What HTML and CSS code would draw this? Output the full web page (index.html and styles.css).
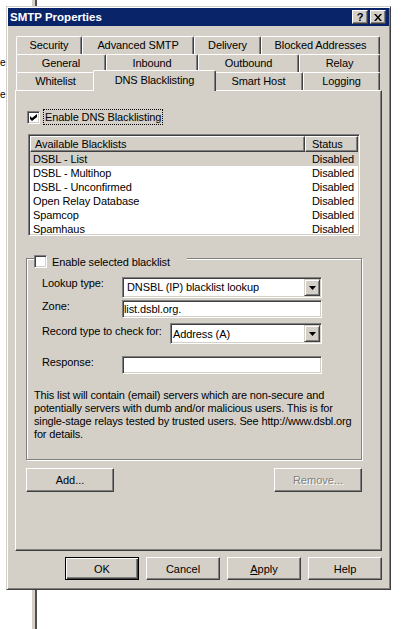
FILE: index.html
```html
<!DOCTYPE html>
<html lang="en">
<head>
    <meta charset="UTF-8">
    <title>SMTP Properties</title>
    <link rel="stylesheet" href="styles.css">
</head>
<body>
    <!-- bits of the window behind the dialog -->
    <div class="desk-line"></div>
    <div class="desk-text line-1">er</div>
    <div class="desk-text line-2">e</div>

    <div class="window">
        <div class="titlebar">
            <span class="title">SMTP Properties</span>
            <div class="caption-buttons">
                <div class="cap-btn help">?</div>
                <div class="cap-btn">
                    <svg width="8" height="7" viewBox="0 0 8 7"><path d="M0 0h2l2 2.4 2-2.4h2l-3 3.5 3 3.5h-2l-2-2.4-2 2.4h-2l3-3.5z" fill="#000"/></svg>
                </div>
            </div>
        </div>

        <div class="dialog">
            <div class="tabs">
                <div class="tab-row row-1">
                    <div class="tab">Security</div>
                    <div class="tab">Advanced SMTP</div>
                    <div class="tab">Delivery</div>
                    <div class="tab">Blocked Addresses</div>
                </div>
                <div class="tab-row row-2">
                    <div class="tab">General</div>
                    <div class="tab">Inbound</div>
                    <div class="tab">Outbound</div>
                    <div class="tab">Relay</div>
                </div>
                <div class="tab-row row-3">
                    <div class="tab">Whitelist</div>
                    <div class="tab active">DNS Blacklisting</div>
                    <div class="tab">Smart Host</div>
                    <div class="tab">Logging</div>
                </div>
            </div>

            <div class="panel">
                <div class="check-row">
                    <span class="checkbox">
                        <svg width="7" height="7" viewBox="0 0 7 7"><path d="M0 2l2 2 5-4v3l-5 4-2-2z" fill="#000"/></svg>
                    </span>
                    <span class="focus">Enable DNS Blacklisting</span>
                </div>

                <div class="listview">
                    <div class="lv-header">
                        <div class="lv-col">Available Blacklists</div>
                        <div class="lv-col status">Status</div>
                    </div>
                    <div class="lv-row selected"><span>DSBL - List</span><span class="status">Disabled</span></div>
                    <div class="lv-row"><span>DSBL - Multihop</span><span class="status">Disabled</span></div>
                    <div class="lv-row"><span>DSBL - Unconfirmed</span><span class="status">Disabled</span></div>
                    <div class="lv-row"><span>Open Relay Database</span><span class="status">Disabled</span></div>
                    <div class="lv-row"><span>Spamcop</span><span class="status">Disabled</span></div>
                    <div class="lv-row"><span>Spamhaus</span><span class="status">Disabled</span></div>
                </div>

                <div class="group">
                    <div class="group-title">
                        <span class="checkbox"></span>
                        <span>Enable selected blacklist</span>
                    </div>

                    <div class="field-row first">
                        <span class="label">Lookup type:</span>
                        <div class="combo">
                            <span class="value">DNSBL (IP) blacklist lookup</span>
                            <span class="arrow"><svg width="7" height="4" viewBox="0 0 7 4"><path d="M0 0h7l-3.5 4z" fill="#000"/></svg></span>
                        </div>
                    </div>
                    <div class="field-row zone">
                        <span class="label">Zone:</span>
                        <div class="edit">list.dsbl.org.</div>
                    </div>
                    <div class="field-row record">
                        <span class="label">Record type to check for:</span>
                        <div class="combo short">
                            <span class="value">Address (A)</span>
                            <span class="arrow"><svg width="7" height="4" viewBox="0 0 7 4"><path d="M0 0h7l-3.5 4z" fill="#000"/></svg></span>
                        </div>
                    </div>
                    <div class="field-row response">
                        <span class="label">Response:</span>
                        <div class="edit"></div>
                    </div>

                    <p class="note">
                        This list will contain (email) servers which are non-secure and<br>
                        potentially servers with dumb and/or malicious users. This is for<br>
                        single-stage relays tested by trusted users. See http://www.dsbl.org<br>
                        for details.
                    </p>
                </div>

                <div class="list-buttons">
                    <button class="btn wide">Add...</button>
                    <button class="btn wide" disabled>Remove...</button>
                </div>
            </div>

            <div class="dialog-buttons">
                <button class="btn default">OK</button>
                <button class="btn">Cancel</button>
                <button class="btn"><u>A</u>pply</button>
                <button class="btn">Help</button>
            </div>
        </div>
    </div>
</body>
</html>
```

FILE: styles.css
```css
body {
    margin: 0;
    width: 409px;
    height: 629px;
    overflow: hidden;
    position: relative;
    background: #fff;
    font-family: "Liberation Sans", Arial, sans-serif;
    font-size: 11px;
    letter-spacing: -0.1px;
    color: #000;
}

/* desktop behind the dialog */
.desk-line {
    position: absolute;
    left: 32px;
    top: 0;
    width: 3px;
    height: 629px;
    background: #d4d0c8;
    border-right: 2px solid #505050;
}
.desk-text {
    position: absolute;
    left: 0;
    font-size: 10px;
}
.desk-text.line-1 { top: 57px; }
.desk-text.line-2 { top: 89px; }

/* window frame */
.window {
    position: relative;
    margin: 6px 0 0 6px;
    width: 385px;
    height: 584px;
    box-sizing: border-box;
    background: #d4d0c8;
    border: 1px solid;
    border-color: #d4d0c8 #404040 #404040 #d4d0c8;
    box-shadow: inset 1px 1px #fff, inset -1px -1px #808080;
    padding: 1px;
}
.titlebar {
    height: 18px;
    background: #0a246a;
    color: #fff;
    display: flex;
    align-items: center;
    justify-content: space-between;
    padding: 0 3px 0 2px;
}
.title {
    font-weight: bold;
    font-size: 11.5px;
    letter-spacing: 0;
}
.caption-buttons {
    display: flex;
    gap: 2px;
}
.cap-btn {
    width: 16px;
    height: 14px;
    box-sizing: border-box;
    background: #d4d0c8;
    border: 1px solid;
    border-color: #fff #404040 #404040 #fff;
    box-shadow: inset -1px -1px #808080;
    display: flex;
    align-items: center;
    justify-content: center;
    color: #000;
}
.cap-btn.help {
    font-weight: bold;
    font-size: 11px;
    line-height: 12px;
}

.dialog {
    padding: 10px 7px 0 7px;
}

/* property sheet tabs, three rows */
.tabs {
    padding: 0 2px 0 1px;
}
.tab-row {
    display: grid;
    height: 18px;
}
.row-1 { grid-template-columns: 66px 112px 67px 119px; }
.row-2 { grid-template-columns: 90px 92px 101px 81px; }
.row-3 { grid-template-columns: 79px 119px 89px 77px; }

.tab {
    box-sizing: border-box;
    border-top: 1px solid #fff;
    border-left: 1px solid #fff;
    border-right: 1px solid #404040;
    box-shadow: inset -1px 0 #808080;
    border-radius: 2px 2px 0 0;
    background: #d4d0c8;
    display: flex;
    align-items: center;
    justify-content: center;
    padding-bottom: 1px;
}
.tab.active {
    margin: -2px -2px -1px -2px;
    position: relative;
    z-index: 1;
    padding-bottom: 2px;
}

.panel {
    height: 461px;
    box-sizing: border-box;
    border: 1px solid;
    border-color: #fff #404040 #404040 #fff;
    box-shadow: inset -1px -1px #808080;
    padding: 0 18px 0 10px;
}

/* checkboxes */
.checkbox {
    width: 13px;
    height: 13px;
    box-sizing: border-box;
    background: #fff;
    border: 1px solid;
    border-color: #808080 #fff #fff #808080;
    box-shadow: inset 1px 1px #404040, inset -1px -1px #d4d0c8;
    display: flex;
    align-items: center;
    justify-content: center;
    flex: none;
}
.check-row {
    display: flex;
    align-items: center;
    height: 16px;
    margin-top: 18px;
}
.check-row .checkbox {
    margin-left: 1px;
}
.focus {
    margin-left: 3px;
    border: 1px dotted #000;
    padding: 0 1px;
    line-height: 14px;
}

/* list view */
.listview {
    margin: 9px 0 0 2px;
    width: 332px;
    height: 102px;
    box-sizing: border-box;
    background: #fff;
    border: 1px solid;
    border-color: #808080 #fff #fff #808080;
    box-shadow: inset 1px 1px #404040, inset -1px -1px #d4d0c8;
    padding: 1px;
    overflow: hidden;
}
.lv-header,
.lv-row {
    display: grid;
    grid-template-columns: 275px 53px;
}
.lv-col {
    height: 16px;
    box-sizing: border-box;
    background: #d4d0c8;
    border: 1px solid;
    border-color: #fff #404040 #404040 #fff;
    box-shadow: inset -1px -1px #808080;
    padding-left: 4px;
    line-height: 14px;
}
.lv-col.status {
    padding-left: 6px;
}
.lv-row {
    height: 14px;
    line-height: 14px;
}
.lv-row span {
    padding-left: 3px;
}
.lv-row .status {
    padding-left: 7px;
}
.lv-row.selected {
    background: #d4d0c8;
}

/* group box */
.group {
    margin-top: 22px;
    width: 336px;
    height: 202px;
    box-sizing: border-box;
    border: 1px solid #808080;
    box-shadow: inset 1px 1px #fff, 1px 1px #fff;
}
.group-title {
    display: flex;
    align-items: center;
    gap: 5px;
    width: 153px;
    height: 13px;
    margin: -4px 0 0 7px;
    background: #d4d0c8;
}

.field-row {
    display: flex;
    justify-content: space-between;
    align-items: flex-start;
    width: 280px;
    margin-left: 15px;
    line-height: 13px;
}
.field-row.first { margin-top: 9px; }
.field-row.zone { margin-top: 2px; }
.field-row.record { margin-top: 5px; }
.field-row.record .label { padding-top: 2px; }
.field-row.response { margin-top: 12px; }

.combo,
.edit {
    box-sizing: border-box;
    background: #fff;
    border: 1px solid;
    border-color: #808080 #fff #fff #808080;
    box-shadow: inset 1px 1px #404040, inset -1px -1px #d4d0c8;
    padding: 1px;
}
.combo {
    width: 200px;
    height: 21px;
    display: flex;
}
.combo.short {
    width: 152px;
}
.combo .value {
    flex: 1;
    padding-left: 3px;
    line-height: 17px;
}
.combo.short .value {
    padding-left: 1px;
    padding-top: 1px;
}
.combo .arrow {
    width: 16px;
    height: 17px;
    box-sizing: border-box;
    background: #d4d0c8;
    border: 1px solid;
    border-color: #d4d0c8 #404040 #404040 #d4d0c8;
    box-shadow: inset 1px 1px #fff, inset -1px -1px #808080;
    display: flex;
    align-items: center;
    justify-content: center;
}
.edit {
    width: 200px;
    height: 18px;
    line-height: 14px;
    padding-left: 1px;
}

.note {
    margin: 15px 0 0 7px;
    line-height: 13px;
    letter-spacing: -0.15px;
    white-space: nowrap;
}

/* buttons */
.btn {
    box-sizing: border-box;
    width: 74px;
    height: 23px;
    padding: 0;
    background: #d4d0c8;
    border: 1px solid;
    border-color: #fff #404040 #404040 #fff;
    box-shadow: inset -1px -1px #808080;
    font: inherit;
    color: #000;
}
.btn.wide {
    width: 88px;
    height: 24px;
}
.btn.default {
    border-color: #000;
    box-shadow: inset 1px 1px #fff, inset -1px -1px #404040, inset -2px -2px #808080;
}
.btn:disabled {
    color: #808080;
    text-shadow: 1px 1px #fff;
}
.list-buttons {
    display: flex;
    justify-content: space-between;
    width: 336px;
    margin-top: 8px;
}
.dialog-buttons {
    display: flex;
    justify-content: flex-end;
    gap: 7px;
    margin-top: 6px;
}
```
